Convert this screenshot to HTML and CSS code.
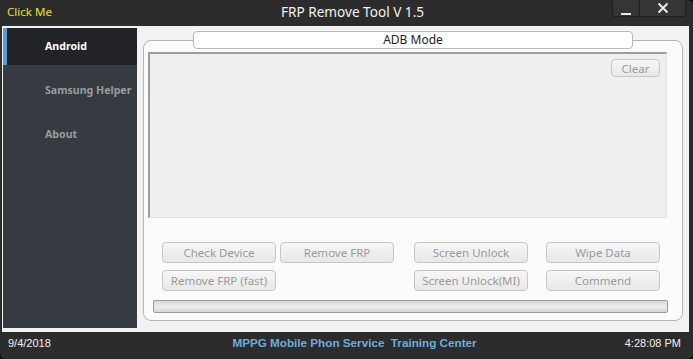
FILE: index.html
```html
<!DOCTYPE html>
<html lang="en">
<head>
    <meta charset="UTF-8">
    <title>FRP Remove Tool V 1.5</title>
    <link rel="stylesheet" href="styles.css">
</head>
<body>
    <div class="window">
        <div class="titlebar">
            <div class="click-me">Click Me</div>
            <div class="title">FRP Remove Tool V 1.5</div>
            <div class="win-buttons">
                <div class="win-btn min">
                    <svg width="12" height="12" viewBox="0 0 12 12"><rect x="1" y="9" width="10" height="2" fill="#e8e8e8"/></svg>
                </div>
                <div class="win-btn close">
                    <svg width="12" height="12" viewBox="0 0 12 12"><path d="M1.5 1.5 L10.5 10.5 M10.5 1.5 L1.5 10.5" stroke="#e8e8e8" stroke-width="2"/></svg>
                </div>
            </div>
        </div>

        <div class="main">
            <div class="sidebar">
                <div class="nav-item active">Android</div>
                <div class="nav-item">Samsung Helper</div>
                <div class="nav-item">About</div>
            </div>

            <div class="content">
                <div class="panel">
                    <div class="panel-title">ADB Mode</div>
                    <div class="log">
                        <button class="btn btn-clear">Clear</button>
                    </div>
                    <div class="actions">
                        <button class="btn c1">Check Device</button>
                        <button class="btn c2">Remove FRP</button>
                        <button class="btn c3">Screen Unlock</button>
                        <button class="btn c4">Wipe Data</button>
                        <button class="btn c1">Remove FRP (fast)</button>
                        <button class="btn c3">Screen Unlock(MI)</button>
                        <button class="btn c4">Commend</button>
                    </div>
                    <div class="progress"></div>
                </div>
            </div>
        </div>

        <div class="statusbar">
            <span class="date">9/4/2018</span>
            <span class="company">MPPG Mobile Phon Service&nbsp; Training Center</span>
            <span class="time">4:28:08 PM</span>
        </div>
    </div>
</body>
</html>
```

FILE: styles.css
```css
body {
    margin: 0;
    background-color: #111;
    font-family: "Noto Sans", "Open Sans", sans-serif;
}

.window {
    width: 693px;
    height: 359px;
    background-color: #2c2c2c;
    border-radius: 0 6px 6px 6px;
    display: flex;
    flex-direction: column;
    overflow: hidden;
}

/* Barre de titre */
.titlebar {
    height: 26px;
    display: grid;
    grid-template-columns: 1fr auto 1fr;
    align-items: start;
}

.click-me {
    color: #e4e42a;
    font-size: 11.6px;
    line-height: 24px;
    padding-left: 7px;
}

.title {
    color: #f2f2f2;
    font-size: 13.6px;
    line-height: 24px;
    padding-left: 12px;
}

.win-buttons {
    display: flex;
    justify-content: flex-end;
    padding-right: 7px;
}

.win-btn {
    height: 17px;
    display: flex;
    align-items: center;
    justify-content: center;
    background-color: #353535;
    border: 1px solid #1e1e1e;
    border-top: none;
    box-sizing: border-box;
}

.win-btn.min {
    width: 28px;
    border-radius: 0 0 0 3px;
}

.win-btn.min svg {
    margin-top: 3px;
}

.win-btn.close {
    width: 46px;
    border-left: none;
    border-radius: 0 0 3px 0;
}

/* Zone principale */
.main {
    height: 306px;
    margin: 0 4px 0 2px;
    padding: 2px 0 4px 1px;
    box-sizing: border-box;
    background-color: #f2f2f2;
    display: flex;
}

.sidebar {
    width: 134px;
    background-color: #363a41;
    display: flex;
    flex-direction: column;
    gap: 7px;
}

.nav-item {
    height: 37px;
    line-height: 36px;
    padding-left: 38px;
    font-size: 10.6px;
    font-weight: bold;
    color: #9a9b9d;
    border-left: 4px solid transparent;
    white-space: nowrap;
}

.nav-item.active {
    background-color: #222326;
    color: #fff;
    border-left-color: #5a9bd2;
}

.content {
    flex: 1;
}

.panel {
    position: relative;
    width: 540px;
    height: 281px;
    margin: 12px 0 0 6px;
    box-sizing: border-box;
    border: 1px solid #b4b4b4;
    border-radius: 8px;
    background-color: #fbfbfb;
    padding: 11px 0 0 4px;
}

.panel-title {
    position: absolute;
    top: -10px;
    left: 49px;
    width: 440px;
    height: 18px;
    box-sizing: border-box;
    border: 1px solid #b8b8b8;
    border-radius: 4px;
    background-color: #fff;
    text-align: center;
    font-size: 12px;
    line-height: 16px;
    color: #222;
}

.log {
    width: 519px;
    height: 166px;
    box-sizing: border-box;
    background-color: #efefef;
    border-top: 2px solid #9c9c9c;
    border-left: 2px solid #9c9c9c;
    border-right: 1px solid #e2e2e2;
    border-bottom: 1px solid #e2e2e2;
    display: flex;
    justify-content: flex-end;
    align-items: flex-start;
    padding: 5px 6px 0 0;
}

.btn {
    font-family: "Noto Sans", "Open Sans", sans-serif;
    font-size: 11.5px;
    color: #9a9a9a;
    background: linear-gradient(#f6f6f6, #e8e8e8);
    border: 1px solid #c6c6c6;
    border-radius: 4px;
    height: 21px;
    padding: 0;
    box-sizing: border-box;
    line-height: 18px;
}

.btn-clear {
    width: 49px;
    height: 18px;
    line-height: 15px;
    font-size: 11.5px;
}

.actions {
    display: grid;
    grid-template-columns: 114px 114px 12px 114px 10px 114px;
    grid-template-rows: 21px 21px;
    column-gap: 4px;
    row-gap: 7px;
    margin: 24px 0 0 14px;
}

.c1 { grid-column: 1; }
.c2 { grid-column: 2; }
.c3 { grid-column: 4; }
.c4 { grid-column: 6; }

.progress {
    width: 515px;
    height: 13px;
    margin: 9px 0 0 5px;
    box-sizing: border-box;
    border: 1px solid #9a9a9a;
    border-radius: 2px;
    background: linear-gradient(#d8d8d8, #ececec 50%, #d6d6d6);
}

/* Barre d'état */
.statusbar {
    height: 24px;
    margin: 0 4px 0 2px;
    padding-bottom: 3px;
    box-sizing: border-box;
    display: grid;
    grid-template-columns: 1fr auto 1fr;
    align-items: center;
    font-family: "Liberation Sans", Arial, sans-serif;
    font-size: 11px;
    color: #f0f0f0;
}

.date {
    padding-left: 6px;
}

.company {
    color: #6aaedd;
    font-weight: bold;
    font-size: 11.7px;
    padding-left: 18px;
}

.time {
    text-align: right;
    padding-right: 8px;
}
```
